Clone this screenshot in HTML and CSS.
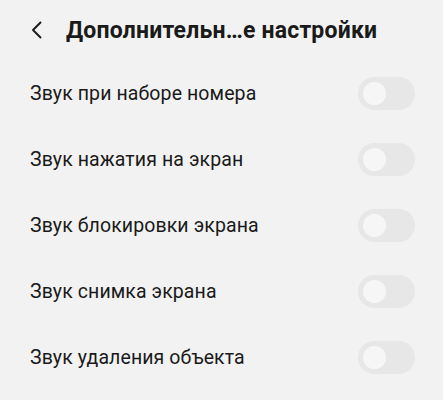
FILE: index.html
```html
<!DOCTYPE html>
<html lang="ru">
<head>
<meta charset="utf-8">
<link rel="stylesheet" href="styles.css">
</head>
<body>
<div class="screen">
  <header class="topbar">
    <svg class="back" width="14" height="18" viewBox="0 0 14 18"><path d="M10.5 1.5 L3 9 L10.5 16.5" fill="none" stroke="#1a1a1a" stroke-width="1.9" stroke-linecap="round" stroke-linejoin="round"/></svg>
    <h1 class="title">Дополнительн…е настройки</h1>
  </header>
  <ul class="list">
    <li class="row"><span class="label">Звук при наборе номера</span><span class="toggle"><span class="knob"></span></span></li>
    <li class="row"><span class="label">Звук нажатия на экран</span><span class="toggle"><span class="knob"></span></span></li>
    <li class="row"><span class="label">Звук блокировки экрана</span><span class="toggle"><span class="knob"></span></span></li>
    <li class="row"><span class="label">Звук снимка экрана</span><span class="toggle"><span class="knob"></span></span></li>
    <li class="row"><span class="label">Звук удаления объекта</span><span class="toggle"><span class="knob"></span></span></li>
  </ul>
</div>
</body>
</html>
```
FILE: styles.css
```css
html, body {
  margin: 0;
  padding: 0;
  background: #f2f2f2;
}
.screen {
  width: 443px;
  height: 400px;
  overflow: hidden;
  font-family: Roboto, "Noto Sans", sans-serif;
  color: #1a1a1a;
}
.topbar {
  display: flex;
  align-items: center;
  height: 60px;
  padding-left: 30px;
  gap: 22px;
}
.back {
  flex: none;
}
.title {
  margin: 0;
  font-size: 23px;
  font-weight: 700;
  letter-spacing: 0.2px;
  white-space: nowrap;
}
.list {
  list-style: none;
  margin: 0;
  padding: 0;
}
.row {
  display: flex;
  align-items: center;
  justify-content: space-between;
  height: 66px;
  padding: 0 28px 0 30px;
}
.label {
  font-size: 19.5px;
  letter-spacing: 0.1px;
}
.toggle {
  width: 57px;
  height: 33px;
  border-radius: 17px;
  background: #e7e7e7;
  display: flex;
  align-items: center;
  padding-left: 5px;
  box-sizing: border-box;
}
.knob {
  width: 23px;
  height: 23px;
  border-radius: 50%;
  background: #f6f6f6;
}
```
